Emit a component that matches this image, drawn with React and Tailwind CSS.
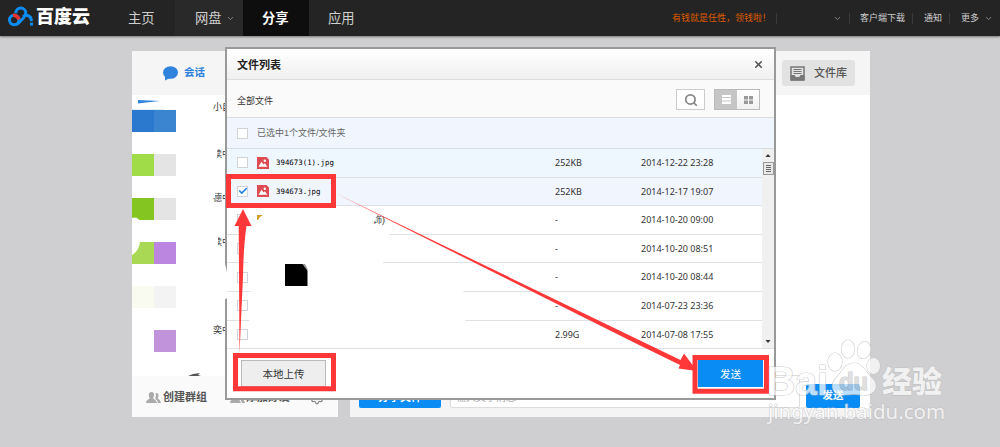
import { ChevronDown, Search, X, Check, Settings } from 'lucide-react'
import clsx from 'clsx'

const FILES = [
  { name: '394673(1).jpg', size: '252KB', date: '2014-12-22 23:28', bg: 'bg-[#eef6fe]' },
  { name: '394673.jpg', size: '252KB', date: '2014-12-17 19:07', bg: 'bg-[#f1f5fe]', checked: true },
  { size: '-', date: '2014-10-20 09:00' },
  { size: '-', date: '2014-10-20 08:51' },
  { size: '-', date: '2014-10-20 08:44' },
  { size: '-', date: '2014-07-23 23:36' },
  { size: '2.99G', date: '2014-07-08 17:55' },
]

const CONTACTS = [
  { left: 'bg-[#2b78cf]', right: 'bg-[#3a84d0]', label: '小自' },
  { left: 'bg-[#a0dc48]', right: 'bg-[#e4e4e4]', label: '读中' },
  { left: 'bg-[#84c522]', right: 'bg-[#e4e4e4]', label: '德中' },
  { left: 'bg-[#a9d854]', right: 'bg-[#bb86e0]', label: '读中' },
  { left: 'bg-[#f9faf0]', right: 'bg-[#f3f3f3]', label: '' },
  { left: 'bg-white', right: 'bg-[#c193da]', label: '奕中' },
]

function Logo() {
  return (
    <div className="flex items-center w-[109px] pl-[8px] pb-[3px] gap-[2px]">
      <svg width="26" height="21" viewBox="0 0 26 21" fill="none" strokeWidth="3">
        <circle cx="6.2" cy="14" r="4.700" stroke="#0c8cf4" />
        <path d="M7.800 7.200a5 5 0 0 1 10-.2c0 3-1.500 4.300-3 5.800l-2.600 2.600c-1.200 1.200-2.300 2.600-4.300 3.200" stroke="#0c8cf4" />
        <path d="M15 10.500a5 5 0 0 1 8.300 3.300v1.400" stroke="#0c8cf4" />
        <path d="M5 9.500c2.500-.6 5 1 6 4" stroke="#e8322d" strokeWidth="3.600" />
        <rect x="22" y="16.600" width="3" height="3" fill="#0c8cf4" />
      </svg>
      <span className="text-[18px] leading-none font-black text-white whitespace-nowrap">百度云</span>
    </div>
  )
}

function Header() {
  return (
    <header className="flex h-[36px] bg-[#242424] text-[#cfcfcf] shadow-[0_1px_2px_#777]">
      <Logo />
      <nav className="flex text-[13.300px] leading-[37px]">
        <a className="w-[66px] pl-[19px]">主页</a>
        <a className="flex items-center w-[68px] pl-[20px] gap-[4px] bg-[#292929]">网盘<ChevronDown size={9} strokeWidth={2.5} className="text-[#888]" /></a>
        <a className="w-[66px] h-[36px] pl-[19px] bg-[#0e0e0e] text-white font-bold">分享</a>
        <a className="w-[66px] pl-[19px]">应用</a>
      </nav>
      <div className="flex items-center ml-auto text-[9px] leading-none whitespace-nowrap">
        <span className="w-[104px] text-[#dd5b00] text-[9px]">有钱就是任性，领钱啦！</span>
        <i className="w-px h-[11px] bg-[#3a3a3a]" />
        <ChevronDown size={9} strokeWidth={2.5} className="ml-[56px] mr-[7px] text-[#888]" />
        <i className="w-px h-[11px] bg-[#3a3a3a]" />
        <span className="w-[45px] ml-[10px]">客户端下载</span>
        <i className="w-px h-[11px] bg-[#3a3a3a] ml-[7px]" />
        <span className="ml-[11px]">通知</span>
        <i className="w-px h-[11px] bg-[#3a3a3a] ml-[7px]" />
        <span className="ml-[11px]">更多</span>
        <ChevronDown size={9} strokeWidth={2.5} className="ml-[5px] mr-[7px] text-[#888]" />
      </div>
    </header>
  )
}

function PeopleIcon({ className }) {
  return (
    <svg width="15" height="13" viewBox="0 0 15 13" fill="#aaa" className={className}>
      <path d="M5.500 1c2 0 2.800 1.500 2.600 3.500-.2 1.500-.8 2-1 2.500.3 1.500 3.400 1.500 3.700 5H0c.3-3.500 3.500-3.500 3.800-5-.3-.5-.8-1-1-2.500C2.600 2.500 3.500 1 5.500 1z" />
      <path d="M9.500 2c2.300-.4 3.300 1 3 3-.2 1.200-.6 1.500-.8 2 .3 1.200 3 1.500 3.200 5h-3c-.2-2.500-1.600-3.500-2.700-4.300 .7-1.700 1-4 .3-5.700z" />
    </svg>
  )
}

function ContactPanel() {
  return (
    <section className="flex flex-col w-[206px] h-[366px] bg-white">
      <div className="flex items-center h-[44px] pl-[31px] bg-[#f5f5f5] text-[#2f83dd] text-[10.500px] font-bold">
        <svg width="15" height="15" viewBox="0 0 15 15" fill="#2f83dd" className="mr-[6px]">
          <ellipse cx="7.500" cy="6.500" rx="7.500" ry="6.300" />
          <path d="M2 10v4.500l5-2.500z" />
        </svg>
        会话
      </div>
      <svg width="206" height="15" viewBox="0 0 206 15" className="block shrink-0">
        <path d="M6 5l22 1-14 1.500-8 1z" fill="#2f83dd" />
        <path d="M0 14h32v1H0z" fill="#dcebf7" />
      </svg>
      <ul className="flex flex-col gap-[22px] h-[266px]">
        {CONTACTS.map((c, i) => (
          <li key={i} className="flex h-[22px]">
            <span className={clsx('w-[22px]', c.left)} />
            <span className={clsx('w-[22px]', c.right)} />
            <span className={clsx('ml-[37px] text-[9px] leading-[12px] text-[#333] whitespace-nowrap', i === 0 ? '-mt-[9px]' : '-mt-[6px]')}>{c.label}</span>
          </li>
        ))}
      </ul>
      <div className="flex items-center h-[41px] pl-[14px] pt-[2px] bg-[#fafafa] text-[#555] text-[11px] font-bold whitespace-nowrap">
        <PeopleIcon className="mr-[2px]" />
        创建群组
        <PeopleIcon className="ml-[23px] mr-[1px]" />
        添加好友
        <Settings size={14} className="ml-[20px] text-[#888]" />
      </div>
    </section>
  )
}

function ChatPanel() {
  return (
    <section className="flex flex-col w-[520px] h-[366px] bg-white">
      <div className="flex items-center justify-end h-[44px] pr-[15px] bg-[#f5f5f5]">
        <button className="flex items-center w-[73px] h-[26px] pl-[8px] rounded-[3px] bg-[#e2e2e2] text-[#555] text-[11px] font-medium">
          <svg width="15" height="15" viewBox="0 0 15 15" fill="none" stroke="#777" className="mr-[9px]">
            <path d="M1 1h13v13H1z" strokeWidth="1.500" />
            <path d="M3.500 3.500h8M3.500 5.500h8M3.500 7.500h8" />
            <path d="M1 9.500h3.500l1 2h4l1-2H14V14H1z" fill="#777" />
          </svg>
          文件库
        </button>
      </div>
      <div className="flex-1" />
      <div className="flex h-[42px] bg-[#f4f4f4] pl-[9px]">
        <button className="w-[82px] h-[33px] pt-[12px] rounded-[2px] bg-[#0a8cf5] text-white text-[11px] font-bold">分享文件</button>
        <div className="w-[350px] h-[33px] ml-[9px] pl-[5px] pt-[17px] border border-[#ddd] rounded-[2px] bg-white text-[#aaa] text-[10px] leading-none">输入文字消息</div>
        <div className="flex-1 h-[33px] pl-[6px] pt-[9px] bg-white">
          <button className="block w-[54px] h-[24px] rounded-[2px] bg-[#0a8cf5] text-white text-[10.500px] font-bold">发送</button>
        </div>
      </div>
    </section>
  )
}

function Checkbox({ checked }) {
  return (
    <span className="flex items-center justify-center w-[11px] h-[11px] border border-[#d0d3d8] bg-white">
      {checked && <Check size={10} strokeWidth={4} className="shrink-0 text-[#2583e0]" />}
    </span>
  )
}

function ImageIcon() {
  return (
    <svg width="12" height="12" viewBox="0 0 12 12">
      <path d="M0 0h9.500L12 2.500V12H0z" fill="#dc4c52" />
      <path d="M1.500 9.800l3-5 2 2.700 1.300-1.200 2.600 3.500z" fill="#fff" />
      <circle cx="7.800" cy="3.800" r="1.200" fill="#fff" />
    </svg>
  )
}

function FileRow({ file }) {
  return (
    <li className={clsx('flex items-center h-[28.600px] pl-[10px] border-b border-[#dfe2e4]', file.bg)}>
      <Checkbox checked={file.checked} />
      <span className="w-[28px] pl-[9px]">{file.name && <ImageIcon />}</span>
      <span className="w-[279px] text-[7.400px] text-black font-['DejaVu_Sans_Mono',monospace]">{file.name}</span>
      <span className="w-[86px] text-[#333]">{file.size}</span>
      <span className="text-[#333]">{file.date}</span>
    </li>
  )
}

function FileDialog() {
  return (
    <div className="absolute left-[225px] top-[47px] w-[551px] h-[353px] flex flex-col border-2 border-[#999] bg-white">
      <div className="flex items-center justify-between h-[31px] pl-[10px] pr-[10px] bg-gradient-to-b from-white to-[#f0f0f0] border-b border-[#ddd] text-[#222]">
        <b className="pt-[2px] text-[11px]">文件列表</b>
        <X size={11} strokeWidth={3.5} className="text-[#555]" />
      </div>
      <div className="flex items-center h-[38px] pl-[10px] pr-[14px] pt-[2px] bg-[#fafafa] border-b border-[#dcdcdc] text-[9px] text-[#333]">
        <span className="mt-[5px]">全部文件</span>
        <button className="flex items-center justify-center w-[29px] h-[21px] ml-auto mr-[9px] border border-[#ccc] bg-white text-[#888]">
          <Search size={14} strokeWidth={3} />
        </button>
        <div className="flex w-[46px] h-[21px] border border-[#bbb]">
          <span className="flex items-center justify-center flex-1 bg-[#c6c6c6]">
            <svg width="9" height="9" fill="#fff"><path d="M0 0h9v2H0zM0 3h9v2.500H0zM0 6.500h9V9H0z" /></svg>
          </span>
          <span className="flex items-center justify-center flex-1 bg-gradient-to-b from-white to-[#f0f0f0]">
            <svg width="9" height="8" fill="#999"><path d="M0 0h4v3.500H0zM5 0h4v3.500H5zM0 4.500h4V8H0zM5 4.500h4V8H5z" /></svg>
          </span>
        </div>
      </div>
      <div className="flex items-center h-[31px] pl-[10px] gap-[9px] bg-[#f0f5fe] border-b border-[#d8dde4] text-[9px] text-[#666]">
        <Checkbox />
        <span className="pt-[2px]">已选中1个文件/文件夹</span>
      </div>
      <div className="flex h-[200px] border-b border-[#ddd]">
        <ul className="w-[535px] text-[9px] font-['Noto_Sans',sans-serif]">
          {FILES.map((f) => <FileRow key={f.date} file={f} />)}
        </ul>
        <div className="flex flex-col items-center w-[12px] bg-[#f0f0f0]">
          <svg width="12" height="13"><path d="M6 5l2.500 3h-5z" fill="#333" /></svg>
          <span className="flex items-center justify-center w-[11px] h-[13px] border border-[#999] bg-[#e8e8e8]">
            <svg width="5" height="7" stroke="#666"><path d="M0 .5h5M0 2.500h5M0 4.500h5M0 6.500h5" /></svg>
          </span>
          <svg width="12" height="13" className="mt-auto"><path d="M6 8l2.500-3h-5z" fill="#333" /></svg>
        </div>
      </div>
      <div className="flex justify-between pl-[14px] pr-[11px] pt-[11px] text-[10.500px]">
        <button className="w-[85px] h-[27px] pt-[2px] border border-[#bbb] bg-[#eee] text-[#333]">本地上传</button>
        <button className="w-[65px] h-[27px] pt-[2px] bg-[#0a8cf5] text-white">发送</button>
      </div>
    </div>
  )
}

// Erased regions, marker boxes and arrows drawn over the dialog
function Annotations() {
  return (
    <svg className="absolute left-0 top-0" width="1000" height="447" viewBox="0 0 1000 447">
      <g fill="#fff">
        <path d="M241 211q70-5 128 0l20 11v20l-6 10v20q45 3 80 14l3 44q-90 12-180 18l-26-1q-12-4-11-22l3-52-8-20z" />
        <path d="M224 262q5 10 3 36l-3 2z" />
        <path d="M132 242h8q-1 9-8 13zM132 218q5-2 8 3h-8z" />
        <path d="M211 148h6v12h-6zM211 192h4v6h-4zM211 237h7v12h-7z" />
      </g>
      <path d="M257 215h6l-3 2-2 3h-1z" fill="#d4a02a" />
      <text x="373" y="223" fontSize="9" fill="#333">饰)</text>
      <path d="M372 212h5l-1 8-5 3z" fill="#fff" />
      <path d="M285 264h17.500q4 2 5 7V286H285z" fill="#000" />
      <path d="M302.500 264h2.500l2.500 5v2z" fill="#999" />
      <path d="M188 376l5-2 7-1-2 2 3 1z" fill="#555" />
      <g fill="none" stroke="#fe3838" strokeWidth="5">
        <path d="M228.500 176.500h105v29h-105z" />
        <path d="M235.500 355.500h98v33.300h-98z" />
        <path d="M695 357.500h71.500v33.700H695z" />
      </g>
      <g fill="#fe3838">
        <path d="M239.500 354l-.8-128h-4.200l8.500-17 8.500 17h-5q-3 20-3.500 50z" />
        <path d="M336 193.500l344.500 166.500 3.500-6.500 13 17.500-18.500-2.500 1.500-3.500-43-21z" />
      </g>
    </svg>
  )
}

function Watermark() {
  return (
    <svg className="absolute left-[760px] top-[330px]" width="200" height="100" viewBox="0 0 200 100" opacity="0.72">
      <g fill="#fff" stroke="#bdbdbd" strokeWidth="1.200" paintOrder="stroke" strokeLinejoin="round">
        <ellipse cx="88" cy="19" rx="6.500" ry="9" />
        <ellipse cx="104" cy="20" rx="6.500" ry="8.500" transform="rotate(12 104 20)" />
        <ellipse cx="75" cy="32" rx="7" ry="9" />
        <ellipse cx="113.500" cy="36" rx="6.500" ry="8" />
        <path d="M94 33c9 0 13 11 18 15 8 7 3 18-8 17-8-1-12-1-20 0-11 1-15-9-8-17 6-6 9-15 18-15z" />
        <text x="7" y="65" fontSize="40" fontWeight="700" textLength="61" lengthAdjust="spacingAndGlyphs" fontFamily="Liberation Sans, sans-serif">Bai</text>
        <text x="79" y="60" fontSize="24" fontWeight="700" textLength="29" lengthAdjust="spacingAndGlyphs" fill="#d5d5d5" fontFamily="Liberation Sans, sans-serif">du</text>
        <text x="122" y="62" fontSize="30" fontWeight="900" textLength="60">经验</text>
        <text x="8" y="89" fontSize="20" textLength="177" lengthAdjust="spacingAndGlyphs" fontFamily="Noto Sans, sans-serif">jingyan.baidu.com</text>
      </g>
    </svg>
  )
}

export default function App() {
  return (
    <div className="relative w-[1000px] h-[447px] overflow-hidden bg-[#cfcfd1] font-['Liberation_Sans','Noto_Sans_CJK_SC',sans-serif]">
      <Header />
      <main className="flex gap-[12px] pl-[132px] pt-[15px]">
        <ContactPanel />
        <ChatPanel />
      </main>
      <FileDialog />
      <Annotations />
      <Watermark />
    </div>
  )
}
